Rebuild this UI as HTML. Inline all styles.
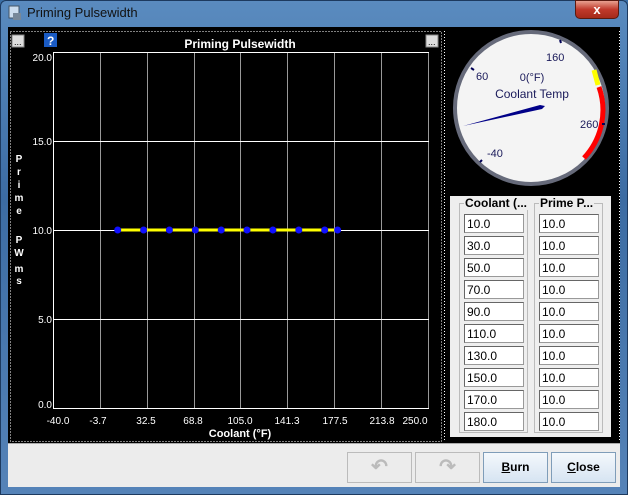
<!DOCTYPE html>
<html><head><meta charset="utf-8"><style>
*{margin:0;padding:0;box-sizing:border-box}
body{width:628px;height:495px;overflow:hidden;font-family:"Liberation Sans",sans-serif;background:#3a6ea5}
.frame{position:absolute;left:0;top:0;width:628px;height:495px;background:linear-gradient(180deg,#5a8bbf 0%,#3c6ca3 40%,#5583b8 100%);border:1px solid #1d3a5f;border-radius:6px 6px 0 0}
.title{position:absolute;left:27px;top:5px;font-size:13px;color:#111}
.close{position:absolute;left:575px;top:0;width:44px;height:19px;background:linear-gradient(#e8a090,#c0392b 50%,#a52a1a);border:1px solid #5a1a10;border-radius:0 0 5px 5px;color:#fff;font-weight:bold;text-align:center;font-size:13px;line-height:18px}
.main{position:absolute;left:8px;top:27px;width:612px;height:416px;background:#000}
.bottom{position:absolute;left:8px;top:443px;width:612px;height:44px;background:#ececec;border-top:1px solid #aaa}
.btn{position:absolute;top:452px;height:31px;width:65px;border:1px solid #9aa;font-size:12px;font-weight:bold;text-align:center;line-height:29px;color:#000}
.tbl{position:absolute;left:450px;top:196px;width:161px;height:241px;background:#eee}
.col{position:absolute;top:7px;width:69px;height:230px;border:1px solid #bbb}
.col .h{position:absolute;top:-8px;left:4px;background:#eee;font-size:12px;font-weight:bold;padding:0 1px;white-space:nowrap}
.cell{position:absolute;left:4px;width:60px;height:19px;background:#fff;border:1px solid #999;border-left-color:#666;border-top-color:#666;font-size:12px;line-height:18px;padding-left:2px}
</style></head><body>
<div class="frame"></div>
<svg style="position:absolute;left:7px;top:5px" width="16" height="16"><rect x="2" y="1" width="10" height="12" fill="#cde" stroke="#456"/><rect x="6" y="8" width="8" height="7" fill="#789"/></svg>
<div class="title">Priming Pulsewidth</div>
<div class="close">x</div>
<div class="main"></div>
<svg style="position:absolute;left:0;top:0" width="628" height="495" font-family="Liberation Sans,sans-serif">
<rect x="10.5" y="31.5" width="431" height="410" fill="none" stroke="#fff" stroke-dasharray="1,2"/>
<rect x="12" y="35" width="12" height="12" fill="#ddd" stroke="#888"/><text x="14" y="45" font-size="9" fill="#000">...</text>
<rect x="426" y="35" width="12" height="12" fill="#ddd" stroke="#888"/><text x="428" y="45" font-size="9" fill="#000">...</text>
<rect x="44" y="33" width="13" height="14" fill="#1a5bc4"/><text x="47" y="45" font-size="12" font-weight="bold" fill="#fff">?</text>
<text x="240" y="48" font-size="12" font-weight="bold" fill="#fff" text-anchor="middle">Priming Pulsewidth</text>
<g stroke="#999" stroke-width="1">
<line x1="100.5" y1="52" x2="100.5" y2="408"/><line x1="147.5" y1="52" x2="147.5" y2="408"/><line x1="194.5" y1="52" x2="194.5" y2="408"/><line x1="240.5" y1="52" x2="240.5" y2="408"/><line x1="287.5" y1="52" x2="287.5" y2="408"/><line x1="334.5" y1="52" x2="334.5" y2="408"/><line x1="381.5" y1="52" x2="381.5" y2="408"/><line x1="428.5" y1="52" x2="428.5" y2="408"/>
</g>
<g stroke="#fff"><line x1="53" y1="52.5" x2="429" y2="52.5"/><line x1="53" y1="141.5" x2="429" y2="141.5"/><line x1="53" y1="230.5" x2="429" y2="230.5"/><line x1="53" y1="319.5" x2="429" y2="319.5"/><line x1="53" y1="408.5" x2="429" y2="408.5"/><line x1="53.5" y1="52" x2="53.5" y2="408"/></g>
<g font-size="10" fill="#fff" text-anchor="end"><text x="52" y="61">20.0</text><text x="52" y="145">15.0</text><text x="52" y="234">10.0</text><text x="52" y="323">5.0</text><text x="52" y="408">0.0</text></g>
<g font-size="10" fill="#fff" text-anchor="middle"><text x="58" y="424">-40.0</text><text x="98" y="424">-3.7</text><text x="146" y="424">32.5</text><text x="193" y="424">68.8</text><text x="240" y="424">105.0</text><text x="287" y="424">141.3</text><text x="335" y="424">177.5</text><text x="382" y="424">213.8</text><text x="415" y="424">250.0</text></g>
<text x="240" y="437" font-size="11" font-weight="bold" fill="#fff" text-anchor="middle">Coolant (°F)</text>
<g font-size="10" font-weight="bold" fill="#fff" text-anchor="middle"><text x="19" y="162">P</text><text x="19" y="175">r</text><text x="19" y="188">i</text><text x="19" y="201">m</text><text x="19" y="214">e</text><text x="19" y="243">P</text><text x="19" y="256">W</text><text x="19" y="272">m</text><text x="19" y="284">s</text></g>
<line x1="117" y1="230" x2="338" y2="230" stroke="#ff0" stroke-width="3"/>
<g fill="#1010ff"><circle cx="117.7" cy="230" r="3.5"/><circle cx="143.6" cy="230" r="3.5"/><circle cx="169.4" cy="230" r="3.5"/><circle cx="195.3" cy="230" r="3.5"/><circle cx="221.2" cy="230" r="3.5"/><circle cx="247" cy="230" r="3.5"/><circle cx="272.9" cy="230" r="3.5"/><circle cx="298.8" cy="230" r="3.5"/><circle cx="324.7" cy="230" r="3.5"/><circle cx="337.6" cy="230" r="3.5"/></g>
<line x1="444.5" y1="31" x2="444.5" y2="441" stroke="#fff" stroke-dasharray="1,2"/>
<line x1="619.5" y1="31" x2="619.5" y2="441" stroke="#fff" stroke-dasharray="1,2"/>
<circle cx="531" cy="108" r="76" fill="#f4f4f4" stroke="#666a7a" stroke-width="4"/>
<path d="M594 70 L598 85" stroke="#ff0" stroke-width="5" fill="none"/>
<path d="M599 87 A70 70 0 0 1 584 158" stroke="#f00" stroke-width="5" fill="none"/>
<g stroke="#000055" stroke-width="2"><line x1="560" y1="40" x2="561" y2="43"/><line x1="471" y1="68" x2="474" y2="70"/><line x1="482" y1="160" x2="480" y2="162"/><line x1="602" y1="124" x2="605" y2="124"/></g>
<g font-size="11" fill="#1a1a5a"><text x="546" y="61">160</text><text x="476" y="80">60</text><text x="487" y="157">-40</text><text x="580" y="128">260</text><text x="532" y="81" text-anchor="middle">0(°F)</text><text x="532" y="98" text-anchor="middle" font-size="12">Coolant Temp</text></g>
<path d="M463 126 L540 105 L545 106 L542 109 Z" fill="#000088"/>
</svg>
<div class="tbl">
<div class="col" style="left:9px"><div class="h">Coolant (...</div>
<div class="cell" style="top:10px">10.0</div><div class="cell" style="top:32px">30.0</div><div class="cell" style="top:54px">50.0</div><div class="cell" style="top:76px">70.0</div><div class="cell" style="top:98px">90.0</div><div class="cell" style="top:120px">110.0</div><div class="cell" style="top:142px">130.0</div><div class="cell" style="top:164px">150.0</div><div class="cell" style="top:186px">170.0</div><div class="cell" style="top:208px">180.0</div></div>
<div class="col" style="left:84px"><div class="h">Prime P...</div>
<div class="cell" style="top:10px">10.0</div><div class="cell" style="top:32px">10.0</div><div class="cell" style="top:54px">10.0</div><div class="cell" style="top:76px">10.0</div><div class="cell" style="top:98px">10.0</div><div class="cell" style="top:120px">10.0</div><div class="cell" style="top:142px">10.0</div><div class="cell" style="top:164px">10.0</div><div class="cell" style="top:186px">10.0</div><div class="cell" style="top:208px">10.0</div></div>
</div>
<div class="bottom"></div>
<div class="btn" style="left:347px;background:#ececec;border-color:#bbb;color:#bbb;font-size:20px">↶</div>
<div class="btn" style="left:415px;background:#ececec;border-color:#bbb;color:#bbb;font-size:20px">↷</div>
<div class="btn" style="left:483px;background:linear-gradient(#f4f8fc,#d6e4f2);border-color:#7f9db9"><u>B</u>urn</div>
<div class="btn" style="left:551px;background:linear-gradient(#f4f8fc,#d6e4f2);border-color:#7f9db9"><u>C</u>lose</div>
</body></html>
